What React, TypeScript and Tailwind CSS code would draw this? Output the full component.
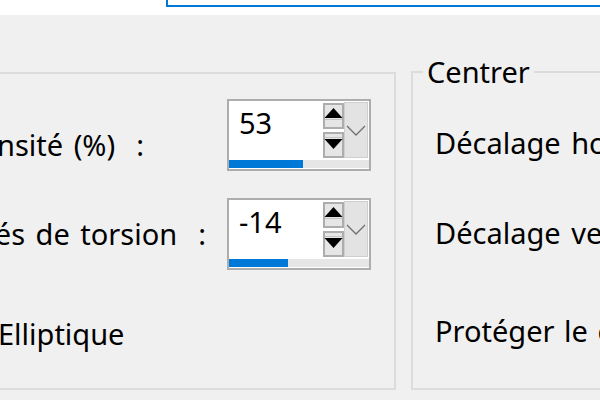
import React from 'react';

type SpinProps = { value: number; min: number; max: number };

function UpButton() {
  return (
    <svg width="21" height="26" viewBox="0 0 21 26">
      <rect x="1" y="1" width="19" height="24" fill="#e6e6e6" stroke="#adadad" strokeWidth="2" />
      <polygon points="10.5,5 19.5,15 1.5,15" fill="#000" />
      <line x1="2" y1="16.5" x2="19" y2="16.5" stroke="#c4c4c4" strokeWidth="1" />
    </svg>
  );
}

function DownButton() {
  return (
    <svg width="21" height="26" viewBox="0 0 21 26">
      <rect x="1" y="1" width="19" height="24" fill="#e6e6e6" stroke="#adadad" strokeWidth="2" />
      <line x1="2" y1="5.5" x2="19" y2="5.5" stroke="#c4c4c4" strokeWidth="1" />
      <polygon points="1.5,7 19.5,7 10.5,17" fill="#000" />
    </svg>
  );
}

function DropPanel() {
  return (
    <svg width="24" height="56" viewBox="0 0 24 56">
      <rect x="0.5" y="0.5" width="23" height="55" fill="#e3e3e3" stroke="#cfcfcf" strokeWidth="1" />
      <polyline points="3,24 12,33 21,24" fill="none" stroke="#707070" strokeWidth="1.3" />
    </svg>
  );
}

// champ numérique avec boutons et barre de progression
function Spin({ value, min, max }: SpinProps) {
  const pct = (value - min) / (max - min);
  return (
    <div className="w-[144px] h-[72px] border-2 border-[#adadad] bg-white flex flex-col shrink-0">
      <div className="flex-1 flex">
        <div className="flex-1 pl-[10px] pt-[3px]">{value}</div>
        <div className="flex flex-col gap-[3px] pt-[2px]">
          <UpButton />
          <DownButton />
        </div>
        <div className="pt-[1px] mr-[1px]">
          <DropPanel />
        </div>
      </div>
      <div className="h-[8px] mb-[1px] bg-[#e6e6e6]">
        <div className="h-full bg-[#0078d7]" style={{ width: `${Math.round(pct * 140)}px` }} />
      </div>
    </div>
  );
}

export default function App() {
  return (
    <div className="w-[600px] h-[400px] overflow-hidden bg-[#f0f0f0] font-['Noto_Sans',sans-serif] text-[29px] leading-[38px] text-black [word-spacing:3px]">
      <div className="h-[15px] bg-white">
        <div className="ml-[166px] h-[7px] border-l-2 border-b-2 border-[#0078d7]" />
      </div>

      <div className="mt-[57px] flex items-start gap-[15px]">
        {/* groupe de gauche */}
        <div className="ml-[-20px] w-[416px] h-[318px] shrink-0 border-2 border-[#dcdcdc] flex flex-col">
          <div className="mt-[25px] flex items-start mr-[23px]">
            <div className="flex-1 min-w-0 flex justify-end mr-[83px] mt-[27px]">
              <span className="whitespace-nowrap">Intensité (%)&nbsp; :</span>
            </div>
            <Spin value={53} min={0} max={100} />
          </div>
          <div className="mt-[27px] flex items-start mr-[23px]">
            <div className="flex-1 min-w-0 flex justify-end mr-[21px] mt-[17px]">
              <span className="whitespace-nowrap">Degrés de torsion&nbsp; :</span>
            </div>
            <Spin value={-14} min={-90} max={90} />
          </div>
          <div className="mt-[45px] ml-[16px] whitespace-nowrap">Elliptique</div>
        </div>

        {/* groupe Centrer */}
        <fieldset className="mt-[-19px] w-[220px] h-[337px] shrink-0 border-2 border-[#dcdcdc]">
          <legend className="ml-[10px] px-[4px]">Centrer</legend>
          <div className="pl-[22px] flex flex-col whitespace-nowrap">
            <div className="mt-[33px]">Décalage horizontal :</div>
            <div className="mt-[52px]">Décalage vertical :</div>
            <div className="mt-[60px] [word-spacing:2px]">Protéger le centre</div>
          </div>
        </fieldset>
      </div>
    </div>
  );
}
